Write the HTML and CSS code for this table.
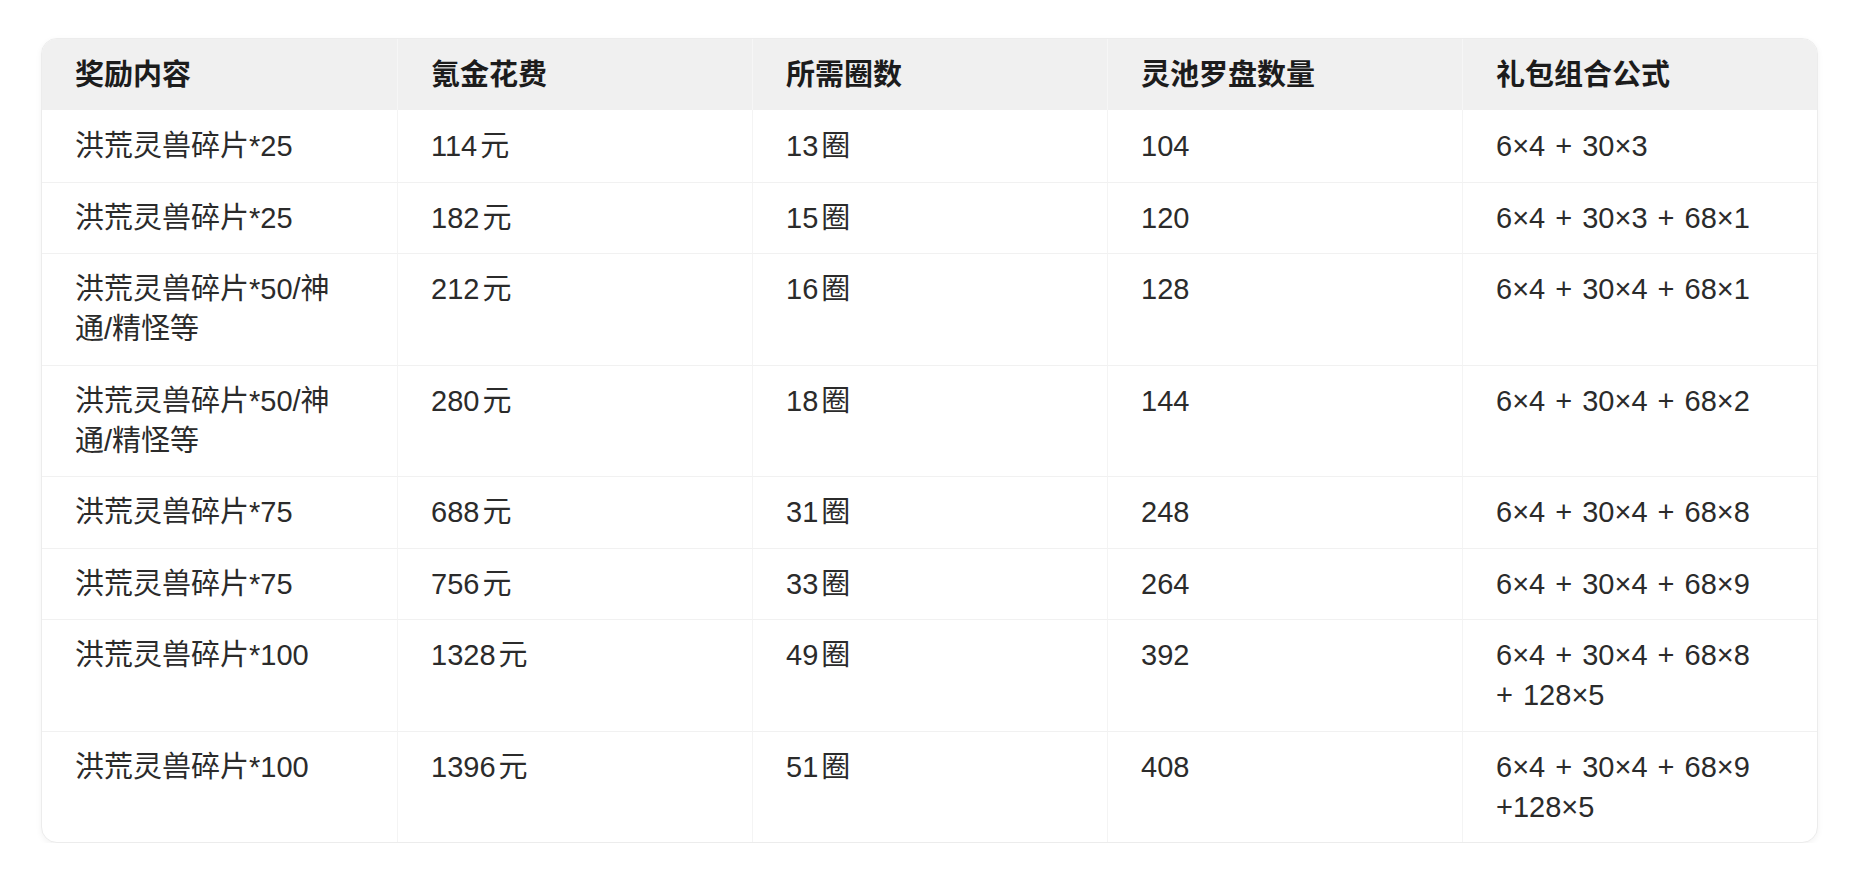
FILE: index.html
```html
<!DOCTYPE html>
<html lang="zh-CN">
<head>
<meta charset="utf-8">
<title>奖励表</title>
<link rel="stylesheet" href="styles.css">
</head>
<body>
<div class="card">
  <table class="reward-table">
    <thead>
      <tr>
        <th>奖励内容</th>
        <th>氪金花费</th>
        <th>所需圈数</th>
        <th>灵池罗盘数量</th>
        <th>礼包组合公式</th>
      </tr>
    </thead>
    <tbody>
      <tr>
        <td>洪荒灵兽碎片*25</td>
        <td>114<span class="unit">元</span></td>
        <td>13<span class="unit">圈</span></td>
        <td>104</td>
        <td class="formula">6×4 + 30×3</td>
      </tr>
      <tr>
        <td>洪荒灵兽碎片*25</td>
        <td>182<span class="unit">元</span></td>
        <td>15<span class="unit">圈</span></td>
        <td>120</td>
        <td class="formula">6×4 + 30×3 + 68×1</td>
      </tr>
      <tr>
        <td>洪荒灵兽碎片*50/神通/精怪等</td>
        <td>212<span class="unit">元</span></td>
        <td>16<span class="unit">圈</span></td>
        <td>128</td>
        <td class="formula">6×4 + 30×4 + 68×1</td>
      </tr>
      <tr>
        <td>洪荒灵兽碎片*50/神通/精怪等</td>
        <td>280<span class="unit">元</span></td>
        <td>18<span class="unit">圈</span></td>
        <td>144</td>
        <td class="formula">6×4 + 30×4 + 68×2</td>
      </tr>
      <tr>
        <td>洪荒灵兽碎片*75</td>
        <td>688<span class="unit">元</span></td>
        <td>31<span class="unit">圈</span></td>
        <td>248</td>
        <td class="formula">6×4 + 30×4 + 68×8</td>
      </tr>
      <tr>
        <td>洪荒灵兽碎片*75</td>
        <td>756<span class="unit">元</span></td>
        <td>33<span class="unit">圈</span></td>
        <td>264</td>
        <td class="formula">6×4 + 30×4 + 68×9</td>
      </tr>
      <tr>
        <td>洪荒灵兽碎片*100</td>
        <td>1328<span class="unit">元</span></td>
        <td>49<span class="unit">圈</span></td>
        <td>392</td>
        <td class="formula">6×4 + 30×4 + 68×8 +&nbsp;128×5</td>
      </tr>
      <tr>
        <td>洪荒灵兽碎片*100</td>
        <td>1396<span class="unit">元</span></td>
        <td>51<span class="unit">圈</span></td>
        <td>408</td>
        <td class="formula">6×4 + 30×4 + 68×9 +128×5</td>
      </tr>
    </tbody>
  </table>
</div>
</body>
</html>
```
FILE: styles.css
```css
html, body {
  margin: 0;
  padding: 0;
  background: #ffffff;
}

body {
  padding: 38px 41px 0 41px;
  font-family: "Liberation Sans", "Noto Sans CJK SC", sans-serif;
  color: #2b2b2b;
}

.card {
  border: 1px solid #ececec;
  border-radius: 16px;
  overflow: hidden;
  box-shadow: 0 2px 6px rgba(0, 0, 0, 0.05);
  background: #ffffff;
}

.reward-table {
  width: 100%;
  border-collapse: separate;
  border-spacing: 0;
  table-layout: fixed;
  font-size: 29px;
  line-height: 40px;
}

.reward-table th {
  background: #f0f0f0;
  color: #1c1c1c;
  font-weight: 700;
  text-align: left;
  padding: 15.5px 33px;
  vertical-align: top;
}

.reward-table td {
  padding: 15.25px 33px;
  border-top: 1px solid #f1f1f1;
  vertical-align: top;
  text-align: left;
}

.reward-table th + th {
  border-left: 1px solid #f6f6f6;
}

.reward-table td + td {
  border-left: 1px solid #f4f4f4;
}

.reward-table tbody tr:first-child td {
  border-top: none;
  padding-top: 15.75px;
  padding-bottom: 15.75px;
}

.unit {
  margin-left: 3px;
}

.formula {
  word-spacing: 2px;
}
```
